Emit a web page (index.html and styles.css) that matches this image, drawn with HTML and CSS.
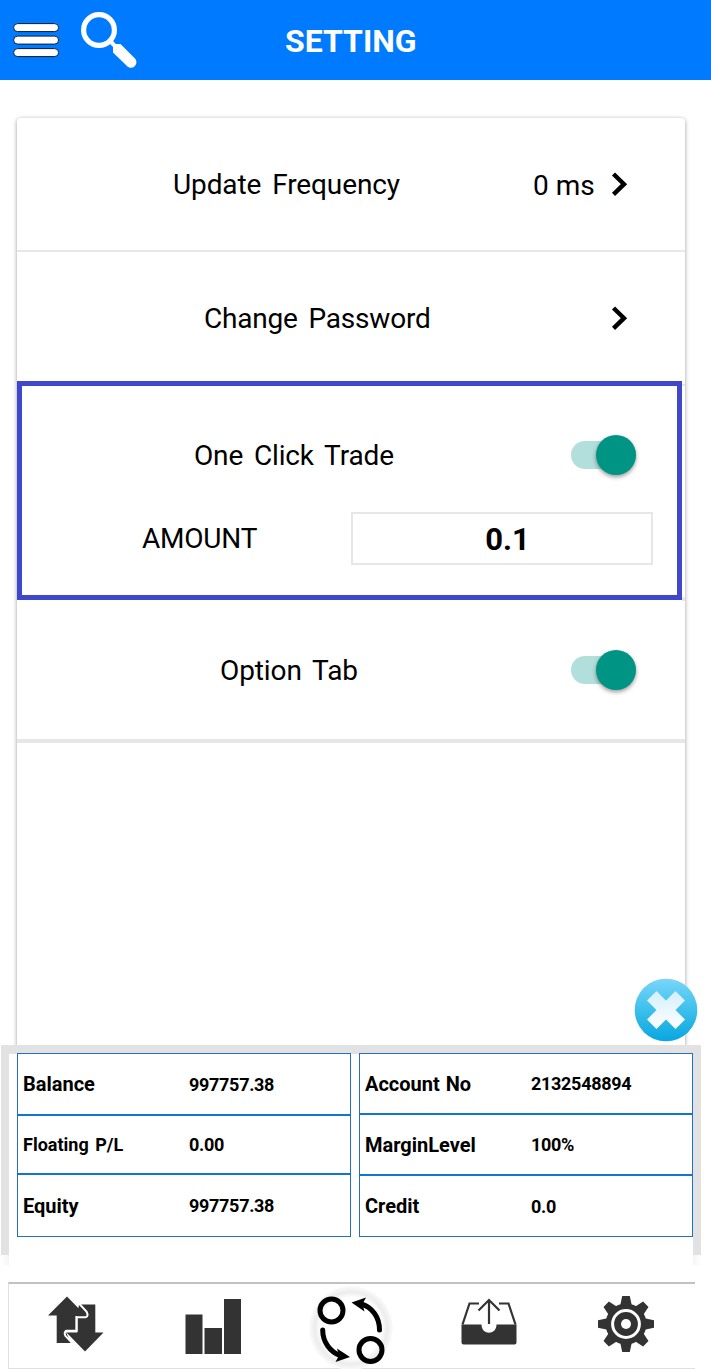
FILE: index.html
```html
<!DOCTYPE html>
<html>
    <head>
        <meta charset="UTF-8">
        <title>Setting</title>
        <link rel="stylesheet" href="styles.css">
    </head>
    <body>
        <div class="header">
            <svg class="menu-icon" width="48" height="38" viewBox="0 0 48 38">
                <g fill="#fff" stroke="#0a1a33" stroke-width="1">
                    <rect x="1.6" y="2.6" width="45" height="8" rx="4"/>
                    <rect x="1.6" y="15.1" width="45" height="8" rx="4"/>
                    <rect x="1.6" y="27.6" width="45" height="8" rx="4"/>
                </g>
            </svg>
            <svg class="search-icon" width="58" height="58" viewBox="0 0 58 58">
                <circle cx="19" cy="19" r="15.4" fill="none" stroke="#fff" stroke-width="5.2"/>
                <path d="M29 29l6 6" stroke="#fff" stroke-width="4"/>
                <path d="M33 34.500L35 33H40.500L55 47.500A5.500 5.500 0 0 1 47.500 55.500L33 41.500z" fill="#fff"/>
            </svg>
            <h1>SETTING</h1>
        </div>
        <div class="card">
            <div class="row frequency">
                <span class="label">Update Frequency</span>
                <span class="value">0 ms</span>
                <svg class="chevron" width="18" height="26" viewBox="0 0 18 26"><path d="M2.500 3l10.500 10.200L2.500 23.400" fill="none" stroke="#000" stroke-width="4.400"/></svg>
            </div>
            <div class="row password">
                <span class="label">Change Password</span>
                <svg class="chevron" width="18" height="26" viewBox="0 0 18 26"><path d="M2.500 3l10.500 10.200L2.500 23.400" fill="none" stroke="#000" stroke-width="4.400"/></svg>
            </div>
            <div class="trade">
                <div class="trade-row">
                    <span class="label">One Click Trade</span>
                    <span class="switch"><span class="thumb"></span></span>
                </div>
                <div class="amount-row">
                    <span class="amount-label">AMOUNT</span>
                    <div class="amount-box">0.1</div>
                </div>
            </div>
            <div class="row option">
                <span class="label">Option Tab</span>
                <span class="switch"><span class="thumb"></span></span>
            </div>
            <div class="close-btn">
                <svg width="64" height="64" viewBox="0 0 64 64">
                    <defs>
                        <linearGradient id="disc" x1="0" y1="0" x2="0" y2="1">
                            <stop offset="0" stop-color="#79d6fa"/>
                            <stop offset=".55" stop-color="#37bdea"/>
                            <stop offset="1" stop-color="#08a6e0"/>
                        </linearGradient>
                        <linearGradient id="cross" x1="0" y1="0" x2="0" y2="1">
                            <stop offset="0" stop-color="#d3effc"/>
                            <stop offset="1" stop-color="#fff"/>
                        </linearGradient>
                    </defs>
                    <circle cx="32" cy="32" r="31.300" fill="url(#disc)"/>
                    <path d="M22.500 13l9.500 9.500 9.500-9.500 9.500 9.500-9.500 9.500 9.500 9.500-9.500 9.500-9.500-9.500-9.500 9.500-9.500-9.500 9.500-9.500-9.500-9.500z" fill="url(#cross)"/>
                </svg>
            </div>
        </div>
        <div class="account">
            <div class="account-inner">
                <table class="left">
                    <tr><th>Balance</th><td>997757.38</td></tr>
                    <tr><th class="small">Floating P/L</th><td>0.00</td></tr>
                    <tr><th>Equity</th><td>997757.38</td></tr>
                </table>
                <table class="right">
                    <tr><th>Account No</th><td>2132548894</td></tr>
                    <tr><th>MarginLevel</th><td>100%</td></tr>
                    <tr><th>Credit</th><td>0.0</td></tr>
                </table>
            </div>
        </div>
        <div class="account-fade"></div>
        <div class="tabs">
            <a class="tab">
                <svg width="62" height="60" viewBox="0 0 62 60">
                    <path d="M32 9.500H48.300V37.500H56.500L38 56.500 19.500 37.500H30.300V20zM20 1.500L39 21H28.500V35H18L24 48H9.700V20.500H1z" fill="#333"/>
                    <path d="M32 8.500L39.500 16.500Q42 21.500 38.500 22.300H29.700V35.700H19.500Q16.500 37.500 18.500 41L26 48.700" fill="none" stroke="#fff" stroke-width="2"/>
                </svg>
            </a>
            <a class="tab">
                <svg width="62" height="60" viewBox="0 0 62 60">
                    <path d="M1.500 19.500h17V59h-17zM20.500 33H38v26H20.500zM40 4h17v55H40z" fill="#333"/>
                </svg>
            </a>
            <a class="tab active">
                <svg width="88" height="85" viewBox="0 0 88 85">
                    <defs>
                        <radialGradient id="halo">
                            <stop offset=".72" stop-color="#fff"/>
                            <stop offset=".86" stop-color="#ececec"/>
                            <stop offset="1" stop-color="#fbfbfb"/>
                        </radialGradient>
                    </defs>
                    <circle cx="43" cy="44" r="42" fill="url(#halo)"/>
                    <g fill="none" stroke="#000" stroke-width="5">
                        <circle cx="23.500" cy="26.500" r="11.500"/>
                        <circle cx="62.500" cy="66" r="11.500"/>
                        <path d="M53 20C64 23 71.500 33 71.500 46M14.700 46C14.700 58 22 68 33 72" stroke-linecap="round"/>
                    </g>
                    <path d="M43.500 18.500L58 13.500 54.500 20 56.500 27.500zM42 73L27.500 78 31 71.500 29 64.500z"/>
                </svg>
            </a>
            <a class="tab">
                <svg width="58" height="60" viewBox="0 0 58 60">
                    <path d="M1.500 29.500h20c0 11 15 11 15 0h20v18q0 2-2 2h-51q-2 0-2-2z" fill="#333"/>
                    <path d="M2.500 29.500L9.500 8.500h9.500M55.500 29.500L48.500 8.500H39M29 29V6M18.500 15.500L29 5l10.500 10.500" fill="none" stroke="#333" stroke-width="2.200"/>
                </svg>
            </a>
            <a class="tab">
                <svg width="58" height="60" viewBox="0 0 58 60">
                    <g transform="translate(29 29)" fill="#333">
                        <circle r="20.500"/>
                        <path id="teeth" d="M-5.800-18.500L-3.800-28h7.600L5.800-18.500zM-5.800 18.500L-3.800 28h7.600L5.800 18.500zM-18.500-5.800L-28-3.800v7.600L-18.500 5.800zM18.500-5.800L28-3.800v7.600L18.500 5.800z"/>
                        <use href="#teeth" transform="rotate(45)"/>
                        <circle r="13.400" fill="none" stroke="#fff" stroke-width="3"/>
                        <circle r="5" fill="#fff"/>
                    </g>
                </svg>
            </a>
        </div>
    </body>
</html>
```

FILE: styles.css
```css
* {
    box-sizing: border-box;
}
body {
    margin: 0;
    height: 1369px;
    overflow: hidden;
    font-family: Roboto, "Liberation Sans", sans-serif;
    background-color: #fff;
    color: #000;
}
svg {
    display: block;
    flex: none;
}
.header {
    display: flex;
    align-items: flex-start;
    height: 80px;
    background-color: #007bff;
}
.menu-icon {
    margin: 21px 0 0 12px;
}
.search-icon {
    margin: 11px 0 0 20px;
}
.header h1 {
    margin: 0 0 0 147px;
    font-size: 32px;
    line-height: 82px;
    font-weight: bold;
    color: #fff;
}
.card {
    position: relative;
    width: 668px;
    height: 928px;
    margin: 38px 0 0 17px;
    border-radius: 4px 4px 0 0;
    box-shadow: 0 1px 4px rgba(0,0,0,0.4);
}
.row {
    display: flex;
    align-items: center;
    border-bottom: 2px solid #e7e7e7;
    font-size: 28px;
}
.label {
    font-size: 28px;
    word-spacing: 4px;
    letter-spacing: -0.1px;
    white-space: nowrap;
}
.frequency {
    height: 134px;
    padding-left: 156px;
}
.frequency .label {
    width: 360px;
}
.value {
    width: 78px;
    padding-top: 2px;
}
.password {
    height: 129px;
    padding-top: 3px;
    padding-left: 187px;
    border-bottom: none;
}
.password .label {
    width: 407px;
    letter-spacing: -0.2px;
}
/* highlighted block */
.trade {
    position: relative;
    width: 665px;
    height: 219px;
    padding-top: 44px;
    border: 5px solid #3f48cc;
}
/* ends of the row separators next to the frame */
.trade::after {
    content: "";
    position: absolute;
    top: -2px;
    right: -8px;
    width: 3px;
    height: 211px;
    border-top: 2px solid #e7e7e7;
    border-bottom: 4px solid #e7e7e7;
}
.trade-row {
    display: flex;
    align-items: center;
    height: 50px;
    padding-left: 172px;
}
.trade-row .label {
    width: 377px;
    letter-spacing: -0.15px;
}
.switch {
    display: flex;
    justify-content: flex-end;
    align-items: center;
    width: 65px;
    height: 28px;
    border-radius: 14px;
    background-color: #b2dfdb;
}
.thumb {
    width: 40px;
    height: 40px;
    border-radius: 50%;
    background-color: #009485;
    box-shadow: 0 2px 4px rgba(0,0,0,0.4);
}
.amount-row {
    display: flex;
    align-items: center;
    height: 53px;
    margin-top: 32px;
    padding-left: 120px;
    font-size: 28px;
}
.amount-label {
    width: 209px;
    letter-spacing: -0.2px;
}
.amount-box {
    width: 302px;
    height: 53px;
    padding-left: 11px;
    border: 2px solid #e7e7e7;
    font-size: 31px;
    line-height: 51px;
    font-weight: bold;
    text-align: center;
}
.option {
    height: 143px;
    padding-left: 203px;
    border-bottom: 4px solid #e7e7e7;
}
.option .label {
    width: 351px;
    padding-top: 2px;
}
.close-btn {
    position: absolute;
    right: -13px;
    bottom: 4px;
}
.account {
    position: relative;
    width: 700px;
    height: 210px;
    margin: -1px 0 0 1px;
    padding: 8px;
    background-color: #e2e2e2;
}
.account-inner {
    display: flex;
    align-items: flex-start;
    gap: 8px;
    height: 212px;
    padding-left: 8px;
    background: linear-gradient(#e2e2e2 1px, #fff 1px);
}
.account table {
    width: 334px;
    height: 184px;
    flex: none;
    border-collapse: separate;
    border-spacing: 0;
    border: 1px solid #2470c0;
    background-color: #fff;
    font-size: 18px;
    font-weight: bold;
    table-layout: fixed;
}
.account th, .account td {
    height: 61px;
    padding: 0 0 0 5px;
    text-align: left;
}
.account th {
    width: 166px;
    font-size: 20px;
    word-spacing: 1px;
}
.account td {
    letter-spacing: -0.3px;
}
.account th.small {
    font-size: 18px;
    word-spacing: 2px;
}
.account .left tr:first-child > * {
    height: 60px;
}
.account .right tr:first-child > * {
    height: 59px;
}
.account .right tr:nth-child(2) > * {
    height: 63px;
}
.account .right tr:last-child > * {
    height: 60px;
}
.account tr:nth-child(2) th, .account tr:nth-child(2) td {
    border-top: 2px solid #1474d4;
    border-bottom: 2px solid #1474d4;
}
.account-fade {
    width: 700px;
    height: 10px;
    margin-left: 1px;
    background: linear-gradient(to right, #fff, #f5f5f5 8px, #fff 8px, #fff 692px, #f5f5f5 692px, #fff);
}
.tabs {
    display: flex;
    width: 687px;
    height: 87px;
    margin: 17px 0 0 8px;
    border-top: 2px solid #c2c2c2;
    border-left: 1px solid #e0e0e0;
    border-bottom: 1px solid #e0e0e0;
}
.tab {
    display: flex;
    justify-content: center;
    width: 137px;
    padding-top: 11px;
}
.tab.active {
    padding-top: 0;
}
```
